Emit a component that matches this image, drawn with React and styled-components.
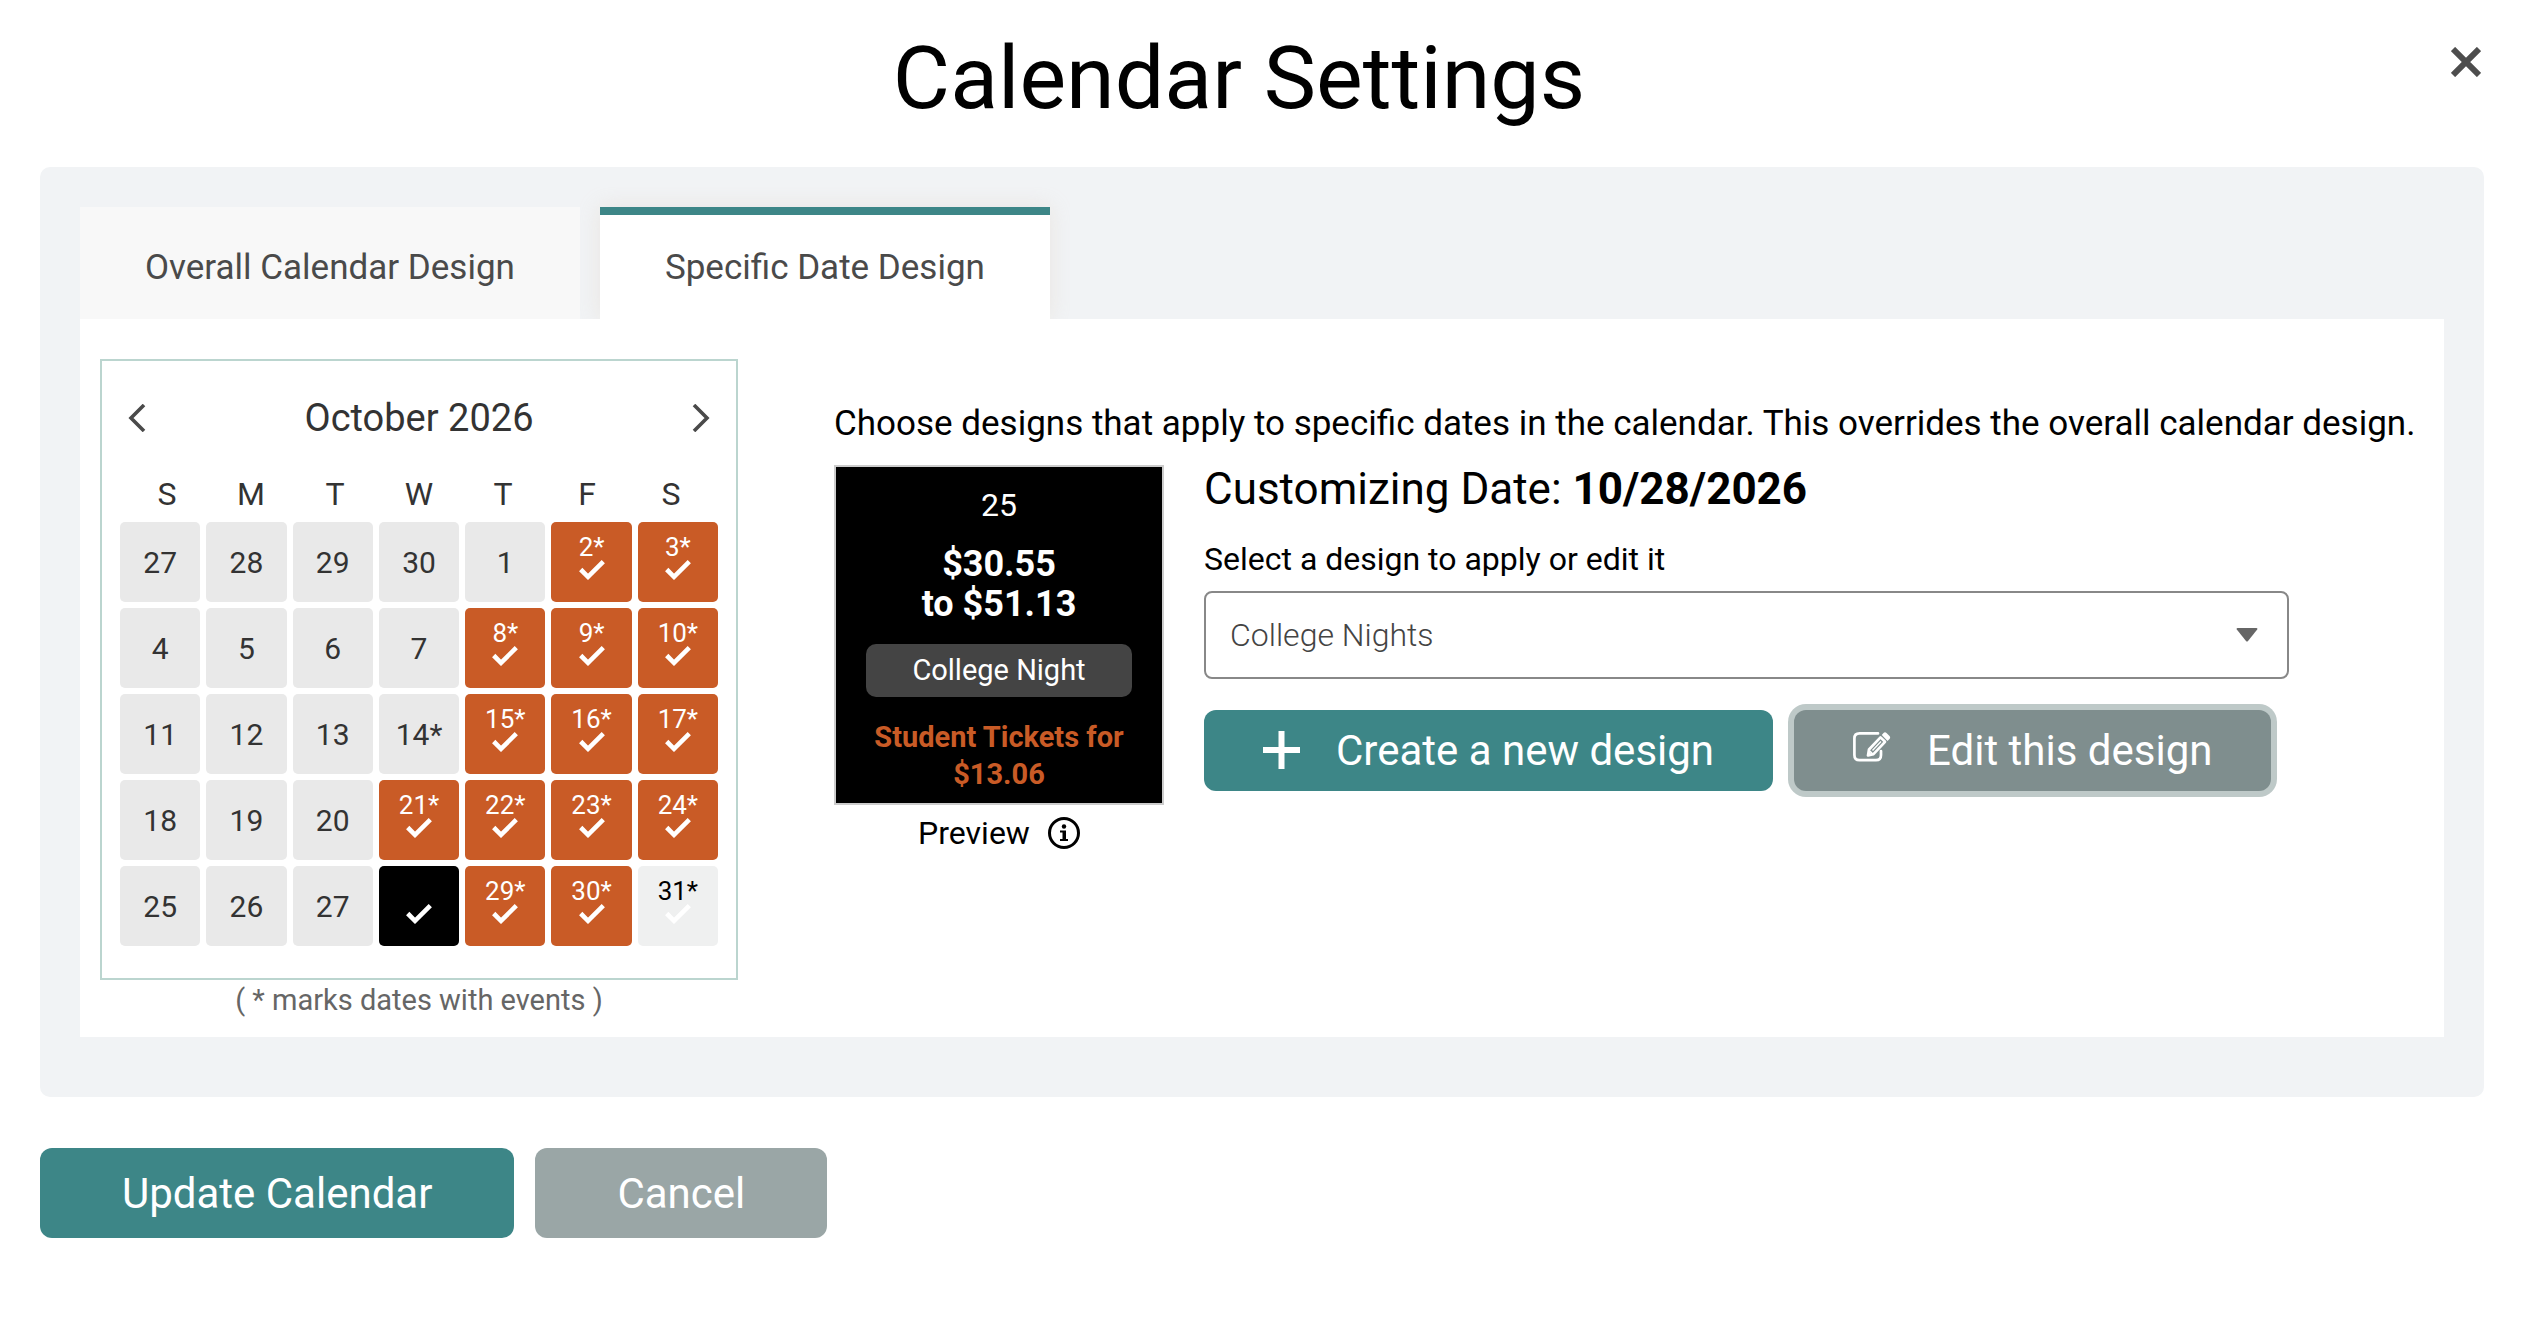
import { useState } from 'react'
import styled, { createGlobalStyle, css } from 'styled-components'

const colors = {
  teal: '#3d8687',
  orange: '#c95b26',
  panel: '#f1f3f5',
  tab: '#f8f8f8',
  day: '#e9e9e9',
  calendarBorder: '#bbd5cf',
  grey: '#9aa6a6',
  darkGrey: '#7f8e8e',
}

const GlobalStyle = createGlobalStyle`
  * {
    box-sizing: border-box;
  }
  body {
    margin: 0;
    background: #fff;
    color: #000;
    font-family: Roboto, 'Liberation Sans', sans-serif;
  }
  button, select {
    font-family: inherit;
  }
  button {
    border: 0;
    padding: 0;
    background: none;
    cursor: pointer;
  }
  h1, h2, p {
    margin: 0;
    font-weight: 400;
  }
`

const Page = styled.main`
  padding: 0 38px 80px 40px;
`

const Header = styled.header`
  display: flex;
  align-items: flex-start;
  gap: 10px;
  padding-top: 26px;
  margin-bottom: 37px;
`

const Title = styled.h1`
  flex: 1;
  text-align: center;
  font-size: 88px;
  line-height: 104px;
`

const CloseButton = styled.button`
  display: flex;
  justify-content: center;
  width: 36px;
  margin-top: 21px;
`

const Panel = styled.section`
  padding: 40px 40px 60px;
  border-radius: 10px;
  background: ${colors.panel};
`

const Tabs = styled.div`
  display: flex;
  gap: 20px;
`

const Tab = styled.button`
  padding: 8px 65px 0;
  height: 112px;
  font-size: 35px;
  color: #4a4a4a;
  background: ${colors.tab};
  ${({ $active }) =>
    $active &&
    css`
      padding-top: 0;
      background: #fff;
      border-top: 8px solid ${colors.teal};
      box-shadow: 0 0 20px rgba(220, 200, 180, 0.3);
      clip-path: inset(-20px -20px 0 -20px);
    `}
`

const TabPanel = styled.div`
  display: flex;
  gap: 96px;
  padding: 40px 20px 17px;
  background: #fff;
`

const CalendarColumn = styled.div`
  flex: none;
  width: 638px;
`

const CalendarBox = styled.div`
  padding: 33px 18px 32px;
  border: 2px solid ${colors.calendarBorder};
`

const MonthBar = styled.div`
  display: flex;
  justify-content: space-between;
  align-items: center;
  padding: 0 8px;
  margin-bottom: 32px;
`

const MonthName = styled.h2`
  font-size: 38px;
  line-height: 48px;
  color: #333;
`

const ArrowButton = styled.button`
  display: flex;
`

const Weekdays = styled.div`
  display: grid;
  grid-template-columns: repeat(7, 84px);
  justify-content: center;
  margin-bottom: 8px;
  text-align: center;
  font-size: 32px;
  line-height: 40px;
  color: #333;
`

const Days = styled.div`
  display: grid;
  grid-template-columns: repeat(7, 1fr);
  gap: 6px;
`

const Day = styled.button`
  display: flex;
  flex-direction: column;
  align-items: center;
  justify-content: center;
  height: 80px;
  border-radius: 5px;
  font-size: 30px;
  color: #333;
  background: ${colors.day};
  ${({ $bg, $color }) =>
    $bg &&
    css`
      font-size: 26px;
      line-height: 26px;
      padding-bottom: 11px;
      color: ${$color};
      background: ${$bg};
    `}
`

const Note = styled.p`
  text-align: center;
  font-size: 29px;
  line-height: 40px;
  color: #666;
`

const DesignColumn = styled.div`
  flex: 1;
  min-width: 0;
  padding-top: 42px;
`

const Intro = styled.p`
  font-size: 35px;
  line-height: 46px;
  margin-bottom: 18px;
`

const DesignRow = styled.div`
  display: flex;
  align-items: flex-start;
  gap: 40px;
`

const PreviewColumn = styled.div`
  flex: none;
  width: 330px;
`

const PreviewBox = styled.div`
  display: flex;
  flex-direction: column;
  align-items: center;
  height: 340px;
  padding: 20px 30px 0;
  border: 2px solid #ccc;
  text-align: center;
  color: #fff;
  background: #000;
`

const PreviewDay = styled.div`
  font-size: 32px;
  line-height: 36px;
  margin-bottom: 21px;
`

const PreviewPrice = styled.div`
  font-size: 36px;
  font-weight: 700;
  line-height: 40px;
`

const PreviewTag = styled.div`
  width: 100%;
  margin: 20px 0 22px;
  border-radius: 10px;
  font-size: 29px;
  line-height: 53px;
  background: #444;
`

const PreviewOffer = styled.div`
  font-size: 29px;
  font-weight: 700;
  line-height: 37px;
  color: ${colors.orange};
`

const PreviewCaption = styled.div`
  display: flex;
  align-items: center;
  justify-content: center;
  gap: 18px;
  padding-top: 8px;
  font-size: 32px;
  line-height: 40px;
`

const InfoButton = styled.button`
  display: flex;
`

const Form = styled.div`
  flex: 1;
  margin-right: 135px;
`

const CustomizingDate = styled.h2`
  font-size: 44px;
  line-height: 48px;
  margin-bottom: 26px;
`

const Label = styled.label`
  display: block;
  font-size: 32px;
  line-height: 40px;
  margin-bottom: 12px;
`

const SelectWrap = styled.div`
  display: grid;
  align-items: center;
  margin-bottom: 31px;
  > * {
    grid-area: 1 / 1;
  }
  svg {
    justify-self: end;
    margin-right: 31px;
    pointer-events: none;
  }
`

const Select = styled.select`
  appearance: none;
  width: 100%;
  height: 88px;
  padding: 0 24px;
  border: 2px solid #888;
  border-radius: 8px;
  font-size: 32px;
  font-weight: 300;
  color: #444;
  background: #fff;
`

const Buttons = styled.div`
  display: flex;
  gap: 21px;
`

const Button = styled.button`
  display: flex;
  align-items: center;
  height: 90px;
  padding: 0 82px;
  border-radius: 12px;
  font-size: 42px;
  color: #fff;
  background: ${({ $bg }) => $bg || colors.teal};
`

const DesignButton = styled(Button)`
  height: 81px;
  padding: 0 59px;
  gap: 36px;
  ${({ $focused }) => $focused && 'box-shadow: 0 0 0 6px #bec9c8;'}
`

const Footer = styled.footer`
  display: flex;
  gap: 21px;
  margin-top: 51px;
`

const Chevron = ({ d }) => (
  <svg width="18" height="28" viewBox="0 0 18 28" fill="none">
    <path d={d} stroke="#4a4a4a" strokeWidth="3.6" />
  </svg>
)

const Check = () => (
  <svg width="26" height="20" viewBox="0 0 26 20" fill="none">
    <path d="M1.7 9.5 9 16.8 24.3 1.7" stroke="#fff" strokeWidth="4.6" />
  </svg>
)

const WEEKDAYS = ['S', 'M', 'T', 'W', 'T', 'F', 'S']

const DAYS = [
  '27', '28', '29', '30', '1', '2*', '3*',
  '4', '5', '6', '7', '8*', '9*', '10*',
  '11', '12', '13', '14*', '15*', '16*', '17*',
  '18', '19', '20', '21*', '22*', '23*', '24*',
  '25', '26', '27', '28*', '29*', '30*', '31*',
]

const DESIGNS = {
  '28*': { $bg: '#000', $color: '#000' },
  '31*': { $bg: '#eff0f0', $color: '#000' },
}

const getDesign = (day) => {
  if (!day.endsWith('*') || day === '14*') return null
  return DESIGNS[day] || { $bg: colors.orange, $color: '#fff' }
}

const Calendar = () => (
  <CalendarColumn>
    <CalendarBox>
      <MonthBar>
        <ArrowButton aria-label="Previous month">
          <Chevron d="M16 1 3 14 16 27" />
        </ArrowButton>
        <MonthName>October 2026</MonthName>
        <ArrowButton aria-label="Next month">
          <Chevron d="M2 1 15 14 2 27" />
        </ArrowButton>
      </MonthBar>
      <Weekdays>
        {WEEKDAYS.map((d, i) => (
          <span key={i}>{d}</span>
        ))}
      </Weekdays>
      <Days>
        {DAYS.map((day, i) => {
          const design = getDesign(day)
          return (
            <Day key={i} {...design}>
              {day}
              {design && <Check />}
            </Day>
          )
        })}
      </Days>
    </CalendarBox>
    <Note>( * marks dates with events )</Note>
  </CalendarColumn>
)

const Preview = () => (
  <PreviewColumn>
    <PreviewBox>
      <PreviewDay>25</PreviewDay>
      <PreviewPrice>
        $30.55
        <br />
        to $51.13
      </PreviewPrice>
      <PreviewTag>College Night</PreviewTag>
      <PreviewOffer>Student Tickets for $13.06</PreviewOffer>
    </PreviewBox>
    <PreviewCaption>
      Preview
      <InfoButton aria-label="About the preview">
        <svg width="32" height="32" viewBox="0 0 32 32" fill="none">
          <circle cx="16" cy="16" r="14.5" stroke="#000" strokeWidth="3" />
          <circle cx="16" cy="9.5" r="2.2" fill="#000" />
          <path d="M12 13.5h6v8.5h2v2h-8v-2h2.5v-6.5H12z" fill="#000" />
        </svg>
      </InfoButton>
    </PreviewCaption>
  </PreviewColumn>
)

export default function App() {
  const [tab, setTab] = useState('date')
  const [design, setDesign] = useState('College Nights')

  return (
    <>
      <GlobalStyle />
      <Page>
        <Header>
          <Title>Calendar Settings</Title>
          <CloseButton aria-label="Close">
            <svg width="30" height="30" viewBox="0 0 30 30" fill="none">
              <path d="M2 2 28 28M28 2 2 28" stroke="#4d4d4d" strokeWidth="6" />
            </svg>
          </CloseButton>
        </Header>
        <Panel>
          <Tabs role="tablist">
            <Tab
              role="tab"
              aria-selected={tab === 'overall'}
              $active={tab === 'overall'}
              onClick={() => setTab('overall')}
            >
              Overall Calendar Design
            </Tab>
            <Tab
              role="tab"
              aria-selected={tab === 'date'}
              $active={tab === 'date'}
              onClick={() => setTab('date')}
            >
              Specific Date Design
            </Tab>
          </Tabs>
          <TabPanel role="tabpanel">
            <Calendar />
            <DesignColumn>
              <Intro>
                Choose designs that apply to specific dates in the calendar.
                This overrides the overall calendar design.
              </Intro>
              <DesignRow>
                <Preview />
                <Form>
                  <CustomizingDate>
                    Customizing Date: <b>10/28/2026</b>
                  </CustomizingDate>
                  <Label htmlFor="design">
                    Select a design to apply or edit it
                  </Label>
                  <SelectWrap>
                    <Select
                      id="design"
                      value={design}
                      onChange={(e) => setDesign(e.target.value)}
                    >
                      <option>College Nights</option>
                    </Select>
                    <svg width="22" height="14" viewBox="0 0 22 14">
                      <path
                        d="M1.5 0h19q1.5 0 .7 1.5L12 13q-1 1-2 0L.8 1.5Q0 0 1.5 0z"
                        fill="#666"
                      />
                    </svg>
                  </SelectWrap>
                  <Buttons>
                    <DesignButton>
                      <svg width="37" height="40" viewBox="0 0 37 40" fill="none">
                        <path d="M0 19h37M18.5 0v38" stroke="#fff" strokeWidth="6" />
                      </svg>
                      Create a new design
                    </DesignButton>
                    <DesignButton $bg={colors.darkGrey} $focused>
                      <svg width="38" height="37" viewBox="0 0 38 37" fill="none">
                        <path
                          d="M25 1.4H6.500Q1.400 1.400 1.400 6.500v16.500Q1.400 28.200 6.500 28.200H23Q28 28.200 28 23v-4"
                          stroke="#fff"
                          strokeWidth="2.700"
                          strokeLinecap="round"
                        />
                        <path
                          d="M15 23.400 16 17.500 27.500 5.400 32 9.800 20.500 22.200z"
                          stroke="#fff"
                          strokeWidth="2.700"
                          strokeLinejoin="round"
                        />
                        <path
                          d="M19.500 18.500 28 9.500M15.500 22.500l2-3 2 2z"
                          stroke="#fff"
                          strokeWidth="1.400"
                        />
                        <path
                          d="M28.800 3 30.500 1q1.500-1.300 3 0l3 3q1.300 1.500 0 3l-2 2z"
                          fill="#fff"
                        />
                      </svg>
                      Edit this design
                    </DesignButton>
                  </Buttons>
                </Form>
              </DesignRow>
            </DesignColumn>
          </TabPanel>
        </Panel>
        <Footer>
          <Button>Update Calendar</Button>
          <Button $bg={colors.grey}>Cancel</Button>
        </Footer>
      </Page>
    </>
  )
}
